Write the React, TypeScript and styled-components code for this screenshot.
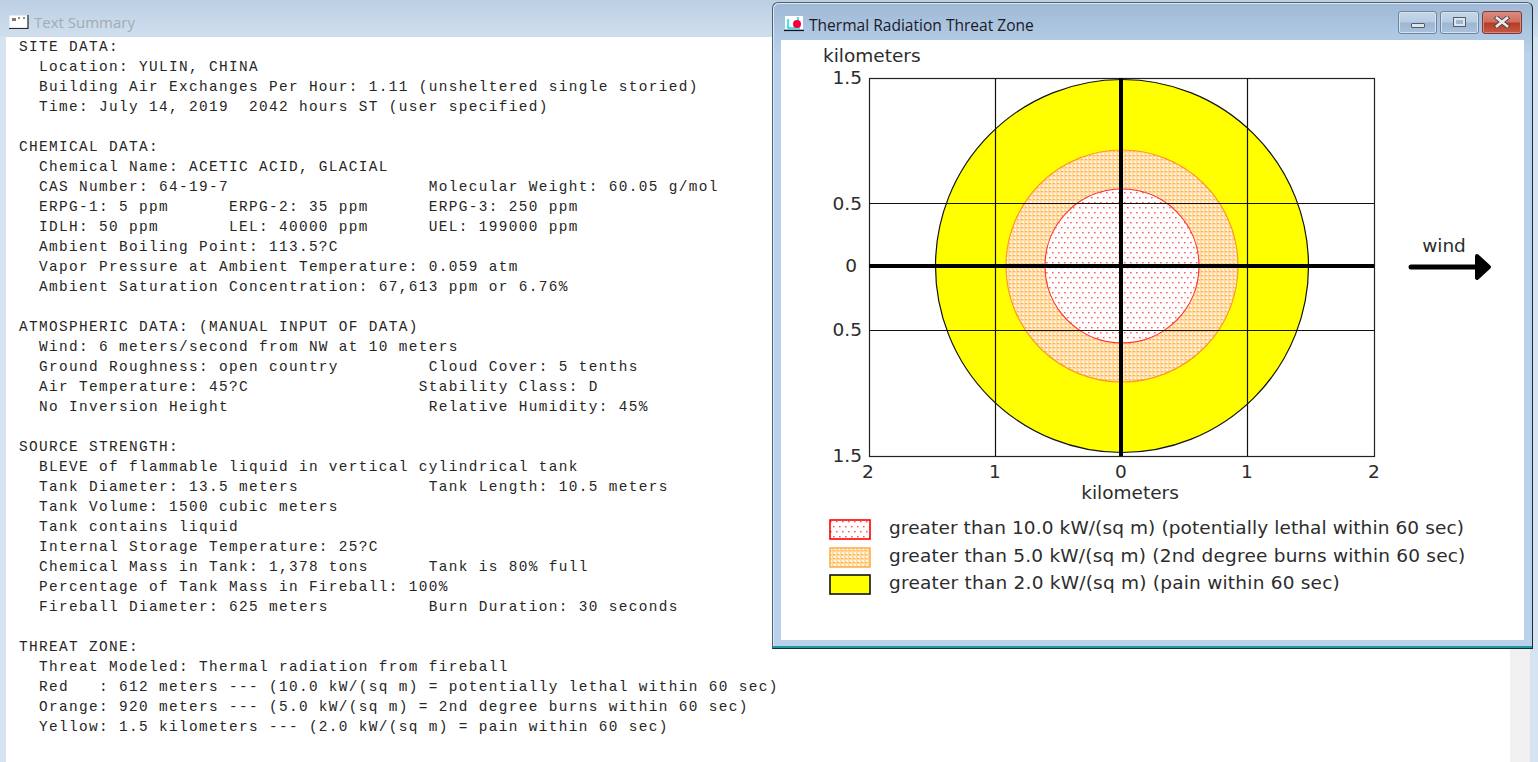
import React from "react";
import styled, { createGlobalStyle } from "styled-components";

const Global = createGlobalStyle`
  html, body { margin: 0; padding: 0; background: #fff; overflow: hidden; }
  #root { width: 1538px; height: 762px; }
`;

const Desktop = styled.div`
  position: relative;
  width: 1538px;
  height: 762px;
  overflow: hidden;
`;

const BackWindow = styled.section`
  display: flex;
  flex-direction: column;
  height: 100%;
  background: #d6e4f2;
`;

const BackTitleBar = styled.header`
  display: flex;
  align-items: center;
  gap: 5px;
  height: 37px;
  padding: 6px 0 0 9px;
  box-sizing: border-box;
  background: linear-gradient(180deg, #bccfe3 0%, #d0dfee 100%);
`;

const BackTitle = styled.span`
  font: 15px "Open Sans", "Noto Sans", sans-serif;
  color: #a3abb3;
`;

const BackBody = styled.div`
  flex: 1;
  display: flex;
  margin: 0 8px 0 6px;
  min-height: 0;
`;

const TextPane = styled.pre`
  flex: 1;
  margin: 0;
  padding: 0 0 0 13px;
  background: #fff;
  font: 14.4px/20px "Liberation Mono", "Courier New", monospace;
  letter-spacing: 1.36px;
  color: #262626;
  overflow: hidden;
`;

const ScrollTrack = styled.div`
  width: 20px;
  background: #f0f0f0;
`;

const ThreatWindow = styled.section`
  position: absolute;
  left: 772px;
  top: 2px;
  width: 761px;
  height: 647px;
  box-sizing: border-box;
  display: flex;
  flex-direction: column;
  padding: 0 8px 8px;
  border: 1px solid #50606e;
  border-bottom-color: #1c2a33;
  border-right-color: #1c2a33;
  border-radius: 6px 6px 0 0;
  background: linear-gradient(180deg, #9fb9d6 0%, #b9d1ea 8%, #b9d1ea 100%);
  box-shadow: inset 0 -2px 0 #1a9aa8, inset 1px 1px 0 #dbe7f3;
`;

const ThreatTitleBar = styled.header`
  display: flex;
  align-items: center;
  height: 37px;
  flex: none;
  gap: 5px;
  padding: 5px 0 0 3px;
  box-sizing: border-box;
`;

const ThreatTitle = styled.span`
  flex: 1;
  padding-top: 1px;
  font: 15.55px "Open Sans", "Noto Sans", sans-serif;
  color: #1a1a2a;
`;

const WindowButtons = styled.div`
  display: flex;
  gap: 3px;
  margin: -4px 2px 0 0;
`;

const CaptionButton = styled.div<{ $close?: boolean; $w: number }>`
  display: flex;
  align-items: center;
  justify-content: center;
  width: ${(p) => p.$w}px;
  height: 23px;
  box-sizing: border-box;
  border: 1px solid ${(p) => (p.$close ? "#7a3a38" : "#6f859c")};
  border-radius: 3px;
  box-shadow: inset 0 0 0 1px ${(p) => (p.$close ? "#d98a7c" : "#d5e2ef")};
  background: ${(p) =>
    p.$close
      ? "linear-gradient(180deg,#d98c7e 0%,#cf6e5e 48%,#b63b26 52%,#c65a45 100%)"
      : "linear-gradient(180deg,#c6d6e8 0%,#b8cce2 48%,#9db6d2 52%,#aac2da 100%)"};
`;

const MinGlyph = styled.span`
  display: block;
  width: 14px;
  height: 5px;
  margin-top: 7px;
  box-sizing: border-box;
  border: 1px solid #4f5d6c;
  border-radius: 1px;
  background: #dfe5ec;
`;

const MaxGlyph = styled.span`
  display: block;
  width: 11px;
  height: 8px;
  box-sizing: border-box;
  border: 2px solid #dfe5ec;
  outline: 1px solid #4f5d6c;
  background: #9db6d2;
`;

const Client = styled.div`
  flex: 1;
  display: flex;
  flex-direction: column;
  background: #fff;
  min-height: 0;
`;

const ChartSvg = styled.svg`
  display: block;
  width: 743px;
  height: 470px;
  flex: none;
  font-family: "DejaVu Sans", Verdana, sans-serif;
  font-size: 18.5px;
  fill: #2c2c2c;
`;

const Legend = styled.ul`
  list-style: none;
  margin: 0;
  padding: 9px 0 0 48px;
  display: flex;
  flex-direction: column;
  gap: 6.5px;
`;

const LegendRow = styled.li`
  display: flex;
  align-items: center;
  gap: 18px;
  height: 21px;
  font: 18.5px "DejaVu Sans", Verdana, sans-serif;
  color: #2c2c2c;
  white-space: pre;
`;

const LegendLabel = styled.span<{ $tracking: number }>`
  padding-bottom: 4px;
  letter-spacing: ${(p) => p.$tracking}px;
`;

const summary = `SITE DATA:
  Location: YULIN, CHINA
  Building Air Exchanges Per Hour: 1.11 (unsheltered single storied)
  Time: July 14, 2019  2042 hours ST (user specified)

CHEMICAL DATA:
  Chemical Name: ACETIC ACID, GLACIAL
  CAS Number: 64-19-7                    Molecular Weight: 60.05 g/mol
  ERPG-1: 5 ppm      ERPG-2: 35 ppm      ERPG-3: 250 ppm
  IDLH: 50 ppm       LEL: 40000 ppm      UEL: 199000 ppm
  Ambient Boiling Point: 113.5?C
  Vapor Pressure at Ambient Temperature: 0.059 atm
  Ambient Saturation Concentration: 67,613 ppm or 6.76%

ATMOSPHERIC DATA: (MANUAL INPUT OF DATA)
  Wind: 6 meters/second from NW at 10 meters
  Ground Roughness: open country         Cloud Cover: 5 tenths
  Air Temperature: 45?C                 Stability Class: D
  No Inversion Height                    Relative Humidity: 45%

SOURCE STRENGTH:
  BLEVE of flammable liquid in vertical cylindrical tank
  Tank Diameter: 13.5 meters             Tank Length: 10.5 meters
  Tank Volume: 1500 cubic meters
  Tank contains liquid
  Internal Storage Temperature: 25?C
  Chemical Mass in Tank: 1,378 tons      Tank is 80% full
  Percentage of Tank Mass in Fireball: 100%
  Fireball Diameter: 625 meters          Burn Duration: 30 seconds

THREAT ZONE:
  Threat Modeled: Thermal radiation from fireball
  Red   : 612 meters --- (10.0 kW/(sq m) = potentially lethal within 60 sec)
  Orange: 920 meters --- (5.0 kW/(sq m) = 2nd degree burns within 60 sec)
  Yellow: 1.5 kilometers --- (2.0 kW/(sq m) = pain within 60 sec)`;

const Patterns = ({ id }: { id: string }) => (
  <defs>
    <pattern id={`red-${id}`} width="6" height="10" patternUnits="userSpaceOnUse">
      <rect width="6" height="10" fill="#fff" />
      <rect x="1" y="2" width="1.6" height="1.4" fill="#ff5a5a" />
      <rect x="4" y="7" width="1.6" height="1.4" fill="#ff5a5a" />
    </pattern>
    <pattern id={`orange-${id}`} width="4" height="4" patternUnits="userSpaceOnUse">
      <rect width="4" height="4" fill="#ffd9a0" />
      <rect x="1" y="1" width="2" height="2" fill="#fff6e6" />
      <rect x="0" y="3" width="2" height="1" fill="#ffb347" />
    </pattern>
  </defs>
);

const LegendSwatch = ({ kind }: { kind: "red" | "orange" | "yellow" }) => {
  const stroke = kind === "red" ? "#ff0000" : kind === "orange" ? "#ffb04a" : "#111";
  const fill = kind === "yellow" ? "#ffff00" : `url(#${kind}-${kind})`;
  return (
    <svg width="42" height="21" style={{ flex: "none" }}>
      <Patterns id={kind} />
      <rect x="1" y="1" width="40" height="19" fill={fill} stroke={stroke} strokeWidth="1.6" />
    </svg>
  );
};

const xl = (x: number) => x - 781;
const yl = (y: number) => y - 40;

const Chart = () => {
  const cx = xl(1121);
  const cy = yl(266);
  const ringX = xl(1122);
  return (
    <ChartSvg viewBox="0 0 743 470">
      <Patterns id="plot" />
      <text x={xl(823)} y={yl(62)}>kilometers</text>
      <circle cx={ringX} cy={cy} r="186.5" fill="#ffff00" stroke="#111" strokeWidth="1.2" />
      <circle cx={ringX} cy={cy} r="116" fill="url(#orange-plot)" stroke="#ff9a20" strokeWidth="1.2" />
      <circle cx={ringX} cy={cy} r="77" fill="url(#red-plot)" stroke="#ff3030" strokeWidth="1.2" />
      <rect x={xl(869.5)} y={yl(78.5)} width="505" height="378" fill="none" stroke="#222" strokeWidth="1.2" />
      <g stroke="#111" strokeWidth="1.2">
        <line x1={xl(995.5)} x2={xl(995.5)} y1={yl(78)} y2={yl(456)} />
        <line x1={xl(1247.5)} x2={xl(1247.5)} y1={yl(78)} y2={yl(456)} />
        <line x1={xl(869)} x2={xl(1374)} y1={yl(203.5)} y2={yl(203.5)} />
        <line x1={xl(869)} x2={xl(1374)} y1={yl(330.5)} y2={yl(330.5)} />
      </g>
      <g stroke="#000" strokeWidth="4">
        <line x1={cx} x2={cx} y1={yl(78)} y2={yl(456)} />
        <line x1={xl(869)} x2={xl(1374)} y1={cy} y2={cy} />
      </g>
      <g textAnchor="end">
        <text x={xl(862)} y={yl(84)}>1.5</text>
        <text x={xl(862)} y={yl(210)}>0.5</text>
        <text x={xl(857)} y={yl(272)}>0</text>
        <text x={xl(862)} y={yl(336)}>0.5</text>
        <text x={xl(862)} y={yl(462)}>1.5</text>
      </g>
      <g textAnchor="middle">
        <text x={xl(868)} y={yl(478)}>2</text>
        <text x={xl(995)} y={yl(478)}>1</text>
        <text x={xl(1121)} y={yl(478)}>0</text>
        <text x={xl(1247)} y={yl(478)}>1</text>
        <text x={xl(1374)} y={yl(478)}>2</text>
        <text x={xl(1130)} y={yl(499)}>kilometers</text>
        <text x={xl(1444)} y={yl(252)}>wind</text>
      </g>
      <line x1={xl(1411)} x2={xl(1480)} y1={yl(267)} y2={yl(267)} stroke="#000" strokeWidth="5" strokeLinecap="round" />
      <path d={`M${xl(1477)} ${yl(256)} L${xl(1489)} ${yl(267)} L${xl(1477)} ${yl(278)} Z`} fill="#000" stroke="#000" strokeWidth="4" strokeLinejoin="round" />
    </ChartSvg>
  );
};

export default function App() {
  return (
    <Desktop>
      <Global />
      <BackWindow>
        <BackTitleBar>
          <svg width="20" height="16" viewBox="0 0 20 16">
            <rect x="0.5" y="1.5" width="18" height="12" fill="#fff" />
            <path d="M0 14.5H19M19 1v14" stroke="#2a2a2a" strokeWidth="1.2" fill="none" />
            <path d="M4 4v3M6 4v3M9 4h2M14 4h2" stroke="#222" strokeWidth="1.2" />
          </svg>
          <BackTitle>Text Summary</BackTitle>
        </BackTitleBar>
        <BackBody>
          <TextPane>{summary}</TextPane>
          <ScrollTrack />
        </BackBody>
      </BackWindow>
      <ThreatWindow>
        <ThreatTitleBar>
          <svg width="20" height="16" viewBox="0 0 20 16">
            <rect x="1" y="0" width="18" height="13" fill="#fff" />
            <path d="M4 3v9h12M14 1v6" stroke="#00e0e8" strokeWidth="1.5" fill="none" />
            <circle cx="13" cy="8" r="4" fill="#f5003c" />
            <path d="M0 14.5H20" stroke="#111" strokeWidth="1.2" />
          </svg>
          <ThreatTitle>Thermal Radiation Threat Zone</ThreatTitle>
          <WindowButtons>
            <CaptionButton $w={39}><MinGlyph /></CaptionButton>
            <CaptionButton $w={39}><MaxGlyph /></CaptionButton>
            <CaptionButton $close $w={40}>
              <svg width="16" height="12" viewBox="0 0 16 12">
                <path d="M3 2l10 8M13 2L3 10" stroke="#4c3a3a" strokeWidth="4.4" strokeLinecap="square" />
                <path d="M3 2l10 8M13 2L3 10" stroke="#e8e8ea" strokeWidth="2.8" strokeLinecap="square" />
              </svg>
            </CaptionButton>
          </WindowButtons>
        </ThreatTitleBar>
        <Client>
          <Chart />
          <Legend>
            <LegendRow><LegendSwatch kind="red" /><LegendLabel $tracking={0.1}>greater than 10.0 kW/(sq m) (potentially lethal within 60 sec)</LegendLabel></LegendRow>
            <LegendRow><LegendSwatch kind="orange" /><LegendLabel $tracking={0.2}>greater than 5.0 kW/(sq m) (2nd degree burns within 60 sec)</LegendLabel></LegendRow>
            <LegendRow><LegendSwatch kind="yellow" /><LegendLabel $tracking={0.22}>greater than 2.0 kW/(sq m) (pain within 60 sec)</LegendLabel></LegendRow>
          </Legend>
        </Client>
      </ThreatWindow>
    </Desktop>
  );
}
